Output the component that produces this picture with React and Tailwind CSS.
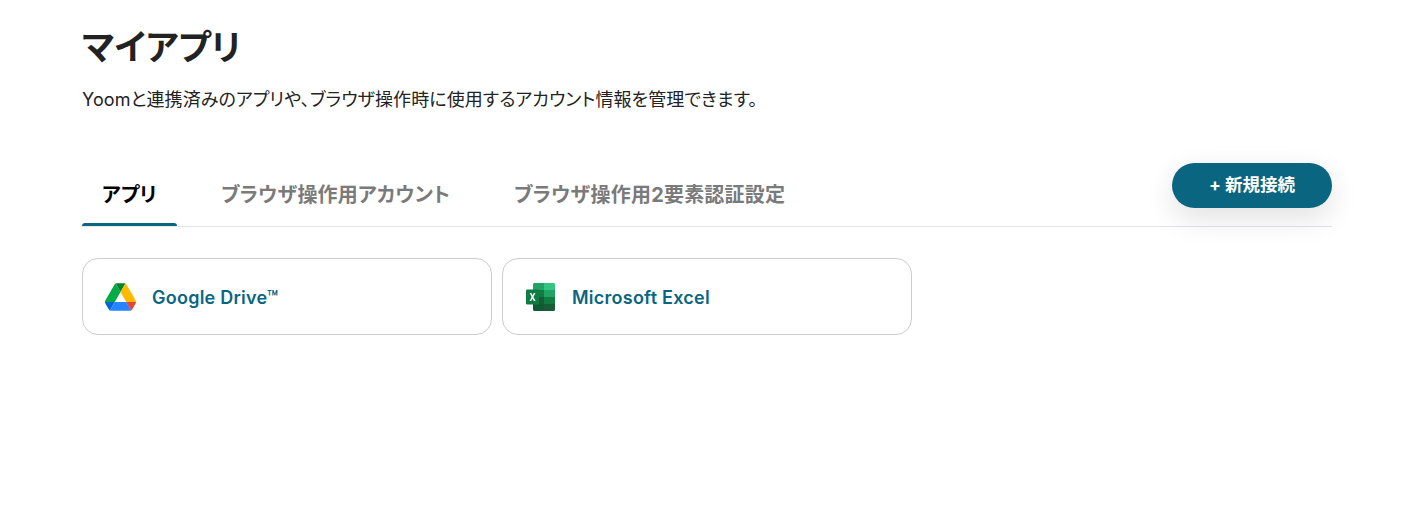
function Drive() {
  return (
    <svg width="31" height="28" viewBox="0 0 87.3 78" className="ml-[1px] shrink-0">
      <path d="m6.6 66.85 3.85 6.65c.8 1.4 1.95 2.5 3.3 3.3l13.75-23.8h-27.5c0 1.55.4 3.1 1.2 4.5z" fill="#0066da"/>
      <path d="m43.65 25-13.75-23.8c-1.35.8-2.5 1.9-3.3 3.3l-25.4 44a9.06 9.06 0 0 0-1.2 4.5h27.5z" fill="#00ac47"/>
      <path d="m73.55 76.8c1.35-.8 2.5-1.9 3.3-3.3l1.6-2.75 7.65-13.25c.8-1.4 1.2-2.95 1.2-4.5h-27.502l5.852 11.5z" fill="#ea4335"/>
      <path d="m43.65 25 13.75-23.8c-1.35-.8-2.9-1.2-4.5-1.2h-18.5c-1.6 0-3.15.45-4.5 1.2z" fill="#00832d"/>
      <path d="m59.8 53h-32.3l-13.75 23.8c1.35.8 2.9 1.2 4.5 1.2h50.8c1.6 0 3.15-.45 4.5-1.2z" fill="#2684fc"/>
      <path d="m73.4 26.5-12.7-22c-.8-1.4-1.95-2.5-3.3-3.3l-13.75 23.8 16.15 28h27.45c0-1.55-.4-3.1-1.2-4.5z" fill="#ffba00"/>
    </svg>
  );
}
function Excel() {
  return (
    <svg width="32" height="28" viewBox="-2 0 32 28" className="shrink-0">
      <path d="M7 1.500c0-.8.7-1.500 1.500-1.500H18v7H7z" fill="#21a366"/>
      <path d="M18 0h9.500c.8 0 1.500.7 1.500 1.500V7H18z" fill="#33c481"/>
      <rect x="7" y="7" width="11" height="7" fill="#107c41"/>
      <rect x="18" y="7" width="11" height="7" fill="#21a366"/>
      <rect x="7" y="14" width="11" height="7" fill="#185c37"/>
      <rect x="18" y="14" width="11" height="7" fill="#107c41"/>
      <path d="M7 21h11v7H8.500C7.700 28 7 27.300 7 26.500z" fill="#0f5a33"/>
      <path d="M18 21h11v5.500c0 .8-.7 1.500-1.500 1.500H18z" fill="#185c37"/>
      <rect x="0" y="6.500" width="13" height="15" rx="1.200" fill="#107c41"/>
      <path d="M3.600 10h1.700l1.300 2.500L7.900 10h1.600l-2.100 4 2.200 4H7.900l-1.400-2.600L5.100 18H3.500l2.200-4z" fill="#fff"/>
    </svg>
  );
}
function Card({ icon, label }) {
  return (
    <div className="flex h-[77px] w-[410px] items-center gap-[16px] rounded-[16px] border border-[#cccccc] bg-white pl-[21px]">
      {icon}
      <span className="pt-[1px] text-[18px] font-semibold tracking-[0.25px] text-[#0a6680]">{label}</span>
    </div>
  );
}
export default function App() {
  return (
    <div className="min-h-[525px] bg-white pr-[84px] pl-[82px] text-[#222222] [font-family:Inter,'Noto_Sans_CJK_JP',sans-serif] [font-feature-settings:'palt']">
      <h1 className="pt-[24px] text-[35px] leading-[46px] font-bold">マイアプリ</h1>
      <p className="mt-[18px] text-[18px] leading-[24px] tracking-[0.09px]">Yoomと連携済みのアプリや、ブラウザ操作時に使用するアカウント情報を管理できます。</p>
      <div className="mt-[51px] flex h-[64px] items-start justify-between border-b border-[#e2e5ea]">
        <div className="flex h-[63px] text-[20px] font-bold tracking-[0.2px]">
          <div className="flex w-[95px] flex-col items-center">
            <span className="mt-[19px] leading-[26px] text-black">アプリ</span>
            <span className="mt-auto h-[3px] w-full rounded-t-[4px] bg-[#0a6680]" />
          </div>
          <span className="mt-[19px] ml-[44px] leading-[26px] text-[#7a7a7a]">ブラウザ操作用アカウント</span>
          <span className="mt-[19px] ml-[64px] leading-[26px] text-[#7a7a7a]">ブラウザ操作用2要素認証設定</span>
        </div>
        <button className="flex h-[45px] w-[160px] items-center justify-center rounded-full bg-[#0a6680] text-[17.5px] font-bold text-white shadow-[0_10px_30px_rgba(0,0,0,0.12)]">+ 新規接続</button>
      </div>
      <div className="mt-[31px] flex gap-[10px]">
        <Card icon={<Drive />} label="Google Drive™" />
        <Card icon={<Excel />} label="Microsoft Excel" />
      </div>
    </div>
  );
}
